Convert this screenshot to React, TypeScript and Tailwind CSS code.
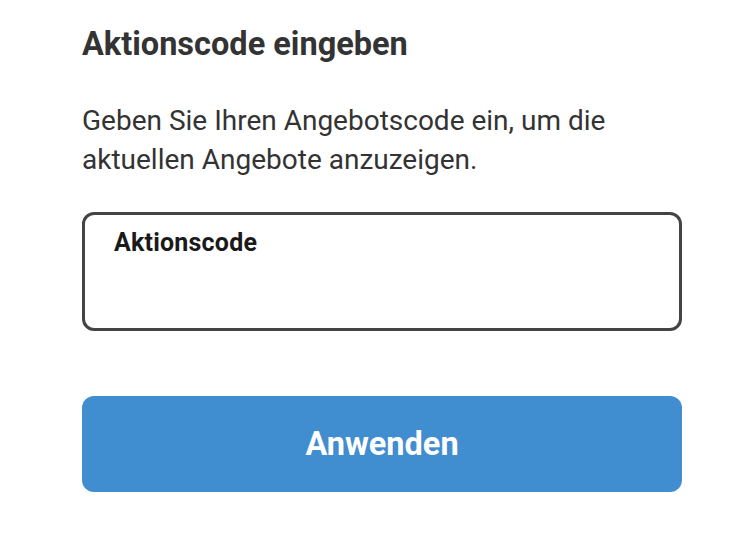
export default function App() {
  return (
    <div className="min-h-screen bg-white font-['Roboto',sans-serif] text-[#333333]">
      <div className="box-content w-[600px] pl-[82px] pt-[25px]">
        <h1 className="text-[32.5px] font-bold leading-[38px]">Aktionscode eingeben</h1>
        <p className="mt-[38px] text-[28px] leading-[39px]">
          Geben Sie Ihren Angebotscode ein, um die aktuellen Angebote anzuzeigen.
        </p>
        <div className="mt-[33px] h-[119px] rounded-[12px] border-[3px] border-[#444444] px-[29px] pt-[13px]">
          <label className="block text-[25px] font-bold leading-[30px] tracking-[0.2px] text-[#1a1a1a]">Aktionscode</label>
          <input className="w-full bg-transparent text-[25px] outline-none" />
        </div>
        <button className="mt-[65px] flex h-[96px] w-full items-center justify-center rounded-[12px] bg-[#408dcf] text-[32.5px] font-bold text-white">
          Anwenden
        </button>
      </div>
    </div>
  )
}
